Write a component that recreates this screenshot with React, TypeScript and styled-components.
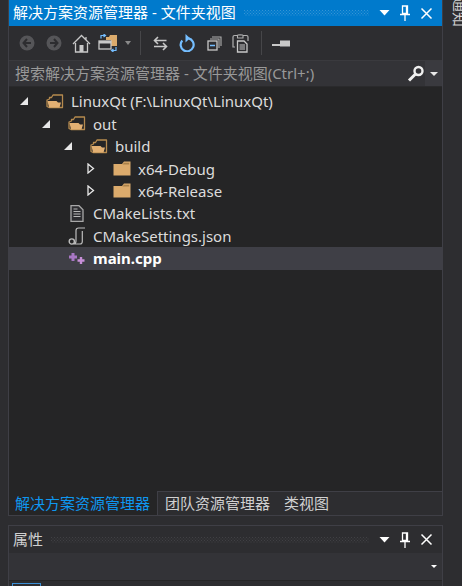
import styled, { createGlobalStyle } from "styled-components";

const GlobalStyle = createGlobalStyle`
  html, body {
    margin: 0;
    padding: 0;
    height: 100%;
    overflow: hidden;
    background: #2d2d30;
  }
  #root {
    height: 100%;
  }
`;

const CJK_FONT = `"Noto Sans", "Noto Sans CJK SC", sans-serif`;

type TreeItem = {
  label: string;
  indent: number;
  arrow?: "open" | "closed";
  icon: "open" | "closed" | "text" | "settings" | "cpp";
  active?: boolean;
};

const items: TreeItem[] = [
  { label: "LinuxQt (F:\\LinuxQt\\LinuxQt)", indent: 11, arrow: "open", icon: "open" },
  { label: "out", indent: 33, arrow: "open", icon: "open" },
  { label: "build", indent: 55, arrow: "open", icon: "open" },
  { label: "x64-Debug", indent: 78, arrow: "closed", icon: "closed" },
  { label: "x64-Release", indent: 78, arrow: "closed", icon: "closed" },
  { label: "CMakeLists.txt", indent: 33, icon: "text" },
  { label: "CMakeSettings.json", indent: 33, icon: "settings" },
  { label: "main.cpp", indent: 33, icon: "cpp", active: true },
];

function Grip({ id }: { id: string }) {
  return (
    <svg width="100%" height="6">
      <defs>
        <pattern id={id} width="3" height="3" patternUnits="userSpaceOnUse">
          <rect x="0" y="0" width="1" height="1" fill="currentColor" />
          <rect x="1.5" y="1.5" width="1" height="1" fill="currentColor" />
        </pattern>
      </defs>
      <rect width="100%" height="6" fill={`url(#${id})`} />
    </svg>
  );
}

function PanelButtons() {
  return (
    <HeaderButtons>
      <svg width="11" height="6" viewBox="0 0 11 6">
        <path d="M0.500 0h10L5.500 5.500z" fill="#fff" />
      </svg>
      <svg width="10" height="16" viewBox="0 0 10 16">
        <path d="M2.500 1h5v7.500h-5z M6.500 1v7.500 M0 9.500h10 M5 10v6" fill="none" stroke="#fff" strokeWidth="1.300" />
      </svg>
      <svg width="13" height="13" viewBox="0 0 13 13">
        <path d="M1.500 1.500l10 10M11.500 1.500l-10 10" fill="none" stroke="#fff" strokeWidth="1.500" />
      </svg>
    </HeaderButtons>
  );
}

function FolderIcon({ open }: { open: boolean }) {
  if (open) {
    return (
      <svg width="18" height="15" viewBox="0 0 18 15">
        <path d="M1 12.500V6l2.500-1V3.500h2L7 1h9.500v12.500H3z" fill="#252526" stroke="#b58a4e" strokeWidth="1.300" strokeLinejoin="round" />
        <path d="M1.500 7h9l1.500 1.500h3L13.500 13.500H3z" fill="#e2b073" />
      </svg>
    );
  }
  return (
    <svg width="18" height="15" viewBox="0 0 18 15">
      <path d="M0.500 3h8.500l2-2.500h6.500V14.500H0.500z" fill="#dcab6c" />
      <path d="M9.500 3.500l1.500-1.800h5.200v1.800z" fill="#a9814a" />
    </svg>
  );
}

function FileIcon({ kind }: { kind: TreeItem["icon"] }) {
  if (kind === "open" || kind === "closed") {
    return <FolderIcon open={kind === "open"} />;
  }
  if (kind === "text") {
    return (
      <svg width="14" height="17" viewBox="0 0 14 17">
        <path d="M1 0.700h8l4 4V16.300H1z" fill="#2d2d30" stroke="#a8a8a8" strokeWidth="1.300" />
        <path d="M3.500 6.500h7M3.500 9h7M3.500 11.500h7M3.500 4h4" stroke="#b8b8b8" strokeWidth="1.100" />
      </svg>
    );
  }
  if (kind === "settings") {
    return (
      <svg width="18" height="18" viewBox="0 0 18 18">
        <path d="M17 1H10.500C8.800 1 8 2 8 3.500V14c0 1.800-1 2.800-2.500 3H12c1.500 0 2.300-.8 2.300-2.500V4" fill="none" stroke="#bdbdbd" strokeWidth="1.200" />
        <circle cx="3.800" cy="14.500" r="2.600" fill="#252526" stroke="#bdbdbd" strokeWidth="1.400" />
      </svg>
    );
  }
  return (
    <svg width="18" height="13" viewBox="0 0 18 13">
      <path d="M5 1v8M1 5h8" stroke="#a877c4" strokeWidth="3" />
      <path d="M13 5v7M9.500 8.500h7" stroke="#c78fd8" strokeWidth="2.400" />
    </svg>
  );
}

export default function App() {
  return (
    <>
      <GlobalStyle />
      <Page>
        <LeftEdge />
        <Main>
          <ExplorerPanel>
            <TitleBar>
              <TitleText>解决方案资源管理器 - 文件夹视图</TitleText>
              <GripArea $color="#3595d6">
                <Grip id="grip-title" />
              </GripArea>
              <PanelButtons />
            </TitleBar>
            <Toolbar>
              <ToolIcon>
                <svg width="16" height="16" viewBox="0 0 16 16">
                  <circle cx="8" cy="8" r="7.500" fill="#555558" />
                  <path d="M8 4L4.500 8 8 12M4.500 8H12" fill="none" stroke="#2d2d30" strokeWidth="2" />
                </svg>
              </ToolIcon>
              <ToolIcon>
                <svg width="16" height="16" viewBox="0 0 16 16">
                  <circle cx="8" cy="8" r="7.500" fill="#555558" />
                  <path d="M8 4l3.500 4L8 12M11.500 8H4" fill="none" stroke="#2d2d30" strokeWidth="2" />
                </svg>
              </ToolIcon>
              <ToolIcon>
                <svg width="19" height="19" viewBox="0 0 19 19">
                  <path d="M1 10L9.500 1.500 18 10M14 3v3" fill="none" stroke="#c8c8c8" strokeWidth="1.300" />
                  <path d="M3.500 9v9h12V9" fill="none" stroke="#c8c8c8" strokeWidth="1.300" />
                  <rect x="7.500" y="11" width="4" height="7" fill="#c8c8c8" />
                </svg>
              </ToolIcon>
              <ToolIcon>
                <svg width="20" height="18" viewBox="0 0 20 18">
                  <path d="M8 3h3l1-2h7v11h-6V6H8z" fill="#dcab6c" />
                  <rect x="1" y="7" width="12" height="8" fill="#2d2d30" stroke="#c8c8c8" strokeWidth="1.300" />
                  <rect x="1" y="7" width="12" height="2.500" fill="#c8c8c8" />
                  <path d="M3 4.500V1.500h4M5.500 0l2 1.500-2 1.500" stroke="#75beff" strokeWidth="1.200" fill="none" />
                  <path d="M18 13v3.500h-4M15.500 15l-2 1.500 2 1.500" stroke="#75beff" strokeWidth="1.200" fill="none" />
                </svg>
              </ToolIcon>
              <SmallCaret />
              <ToolDivider />
              <ToolIcon>
                <svg width="15" height="15" viewBox="0 0 15 15">
                  <path d="M5 1L1.500 4.500 5 8M2 4.500h11.500M10 7l3.500 3.500L10 14M13 10.500H1" fill="none" stroke="#c8c8c8" strokeWidth="1.600" />
                </svg>
              </ToolIcon>
              <ToolIcon>
                <svg width="16" height="18" viewBox="0 0 16 18">
                  <path d="M9.500 4.400a6.500 6.500 0 1 1-6.200 2" fill="none" stroke="#75beff" strokeWidth="2.200" />
                  <path d="M6.500 0L11 4.300 6.500 8.500z" fill="#75beff" />
                </svg>
              </ToolIcon>
              <ToolIcon>
                <svg width="15" height="15" viewBox="0 0 15 15">
                  <path d="M5 1h9v9" fill="none" stroke="#b0b0b0" strokeWidth="1.100" />
                  <path d="M3 3h9v9" fill="none" stroke="#b0b0b0" strokeWidth="1.100" />
                  <rect x="1" y="5" width="9" height="9" fill="#2d2d30" stroke="#c8c8c8" strokeWidth="1.300" />
                  <path d="M3 9.500h5" stroke="#75beff" strokeWidth="1.500" />
                </svg>
              </ToolIcon>
              <ToolIcon>
                <svg width="18" height="19" viewBox="0 0 18 19">
                  <path d="M3 13H1V3c0-1 .5-1.500 1.500-1.500h3M11 1.500h3.500c1 0 1.500.5 1.500 1.500v4" fill="none" stroke="#b0b0b0" strokeWidth="1.200" />
                  <path d="M5.500 1.500c0-1 5.500-1 5.500 0v2.500H5.500z" fill="none" stroke="#b0b0b0" strokeWidth="1.100" />
                  <path d="M5.500 7h6.500l3 3v8H5.500z" fill="#2d2d30" stroke="#c8c8c8" strokeWidth="1.300" />
                  <path d="M7.500 11h5.500M7.500 13h5.500M7.500 15h5.500" stroke="#c8c8c8" strokeWidth="1.100" />
                </svg>
              </ToolIcon>
              <ToolDivider />
              <ToolIcon>
                <svg width="18" height="7" viewBox="0 0 18 7">
                  <path d="M0 4h8V6H0z" fill="#c8c8c8" />
                  <path d="M8 0.500h10v6H8z" fill="#c8c8c8" />
                </svg>
              </ToolIcon>
            </Toolbar>
            <SearchBar>
              <SearchText>搜索解决方案资源管理器 - 文件夹视图(Ctrl+;)</SearchText>
              <svg width="18" height="17" viewBox="0 0 18 17">
                <circle cx="11.500" cy="6" r="4" fill="none" stroke="#f0f0f0" strokeWidth="2.400" />
                <path d="M8.500 9L2 15.500" stroke="#f0f0f0" strokeWidth="3" />
              </svg>
              <SearchCaretBox>
                <SearchCaret />
              </SearchCaretBox>
            </SearchBar>
            <Tree>
              {items.map((item) => (
                <Row key={item.label} $active={item.active} $indent={item.indent}>
                  <ArrowSlot>
                    {item.arrow === "open" && (
                      <svg width="8" height="8" viewBox="0 0 8 8">
                        <path d="M8 0V8H0z" fill="#e8e8e8" />
                      </svg>
                    )}
                    {item.arrow === "closed" && (
                      <svg width="8" height="11" viewBox="0 0 8 11">
                        <path d="M1 1l5.500 4.500L1 10z" fill="none" stroke="#e8e8e8" strokeWidth="1.300" />
                      </svg>
                    )}
                  </ArrowSlot>
                  <IconSlot>
                    <FileIcon kind={item.icon} />
                  </IconSlot>
                  <RowLabel $active={item.active}>{item.label}</RowLabel>
                </Row>
              ))}
            </Tree>
            <Tabs>
              <Tab $selected>解决方案资源管理器</Tab>
              <Tab>团队资源管理器</Tab>
              <Tab>类视图</Tab>
            </Tabs>
          </ExplorerPanel>
          <PropertiesPanel>
            <PropertiesHeader>
              <PropertiesTitle>属性</PropertiesTitle>
              <GripArea $color="#404044">
                <Grip id="grip-props" />
              </GripArea>
              <PanelButtons />
            </PropertiesHeader>
            <Combo>
              <ComboCaret />
            </Combo>
            <PropertyTools>
              <SelectedTool />
            </PropertyTools>
          </PropertiesPanel>
        </Main>
        <RightEdge>
          <VerticalTab>通知</VerticalTab>
        </RightEdge>
      </Page>
    </>
  );
}

const Page = styled.div`
  display: flex;
  height: 586px;
  width: 462px;
  overflow: hidden;
  background: #2d2d30;
  font-family: ${CJK_FONT};
`;

const LeftEdge = styled.div`
  width: 8px;
  flex: none;
`;

const Main = styled.div`
  width: 435px;
  flex: none;
  display: flex;
  flex-direction: column;
  gap: 9px;
`;

const ExplorerPanel = styled.div`
  height: 516px;
  flex: none;
  display: flex;
  flex-direction: column;
  box-sizing: border-box;
  border-left: 1px solid #3f3f46;
  border-right: 1px solid #3f3f46;
  border-bottom: 1px solid #3f3f46;
`;

const TitleBar = styled.div`
  height: 26px;
  flex: none;
  display: flex;
  align-items: center;
  background: #007acc;
  padding: 0 9px 0 4px;
  box-sizing: border-box;
`;

const TitleText = styled.span`
  color: #fff;
  font-size: 15px;
  line-height: 22px;
  margin-bottom: 3px;
  white-space: nowrap;
`;

const GripArea = styled.div<{ $color: string }>`
  flex: 1;
  height: 6px;
  margin: 0 10px 0 8px;
  color: ${(p) => p.$color};
  overflow: hidden;
  svg {
    display: block;
  }
`;

const HeaderButtons = styled.div`
  display: flex;
  align-items: center;
  gap: 10px;
  flex: none;
`;

const Toolbar = styled.div`
  height: 34px;
  flex: none;
  display: flex;
  align-items: center;
  padding-left: 7px;
  gap: 5px;
`;

const ToolIcon = styled.div`
  width: 22px;
  display: flex;
  justify-content: center;
  align-items: center;
  flex: none;
`;

const SmallCaret = styled.div`
  width: 0;
  height: 0;
  border-left: 3.5px solid transparent;
  border-right: 3.5px solid transparent;
  border-top: 4px solid #8a8a8a;
  margin-left: 1px;
`;

const ToolDivider = styled.div`
  width: 1px;
  height: 24px;
  background: #464649;
  margin: 0 3px 0 4px;
`;

const SearchBar = styled.div`
  height: 27px;
  flex: none;
  display: flex;
  align-items: center;
  background: #333337;
  padding-left: 6px;
  box-sizing: border-box;
  border-top: 1px solid #3a3a3e;
  border-bottom: 1px solid #2a2a2c;
`;

const SearchText = styled.span`
  flex: 1;
  color: #999;
  font-size: 15px;
  line-height: 22px;
  margin-bottom: 2px;
  white-space: nowrap;
`;

const SearchCaretBox = styled.div`
  width: 17px;
  align-self: stretch;
  display: flex;
  align-items: center;
  justify-content: center;
  background: #3a3a3f;
`;

const SearchCaret = styled.div`
  width: 0;
  height: 0;
  border-left: 4px solid transparent;
  border-right: 4px solid transparent;
  border-top: 4px solid #e8e8e8;
`;

const Tree = styled.div`
  flex: 1;
  background: #252526;
  padding-top: 3px;
`;

const Row = styled.div<{ $active?: boolean; $indent: number }>`
  height: 22.45px;
  display: flex;
  align-items: center;
  padding-left: ${(p) => p.$indent}px;
  background: ${(p) => (p.$active ? "#3f3f46" : "transparent")};
`;

const ArrowSlot = styled.div`
  width: 26px;
  flex: none;
  display: flex;
  align-items: center;
`;

const IconSlot = styled.div`
  width: 18px;
  flex: none;
  display: flex;
  align-items: center;
  justify-content: center;
`;

const RowLabel = styled.span<{ $active?: boolean }>`
  color: ${(p) => (p.$active ? "#fff" : "#dcdcdc")};
  font-size: 15px;
  font-weight: ${(p) => (p.$active ? 700 : 400)};
  white-space: nowrap;
  margin-left: 7px;
`;

const Tabs = styled.div`
  height: 24px;
  flex: none;
  display: flex;
  background: #2d2d30;
  border-top: 1px solid #3f3f46;
  box-sizing: border-box;
`;

const Tab = styled.div<{ $selected?: boolean }>`
  margin-top: -1px;
  height: 24px;
  box-sizing: border-box;
  padding: 1px 7px 0 ${(p) => (p.$selected ? 6 : 7)}px;
  line-height: 22px;
  font-size: 15px;
  white-space: nowrap;
  color: ${(p) => (p.$selected ? "#0e97f0" : "#d0d0d0")};
  background: ${(p) => (p.$selected ? "#252526" : "transparent")};
  border-right: ${(p) => (p.$selected ? "1px solid #3f3f46" : "none")};
`;

const PropertiesPanel = styled.div`
  flex: 1;
  display: flex;
  flex-direction: column;
  border: 1px solid #3f3f46;
  border-bottom: none;
  min-height: 0;
`;

const PropertiesHeader = styled.div`
  height: 27px;
  flex: none;
  display: flex;
  align-items: center;
  padding: 0 9px 0 4px;
  box-sizing: border-box;
`;

const PropertiesTitle = styled.span`
  color: #d0d0d0;
  font-size: 15px;
  line-height: 22px;
  margin-bottom: 2px;
`;

const Combo = styled.div`
  height: 28px;
  flex: none;
  display: flex;
  align-items: center;
  justify-content: flex-end;
  background: #333337;
  padding-right: 5px;
  box-sizing: border-box;
  border-bottom: 1px solid #252526;
`;

const ComboCaret = styled.div`
  width: 0;
  height: 0;
  border-left: 3px solid transparent;
  border-right: 3px solid transparent;
  border-top: 3px solid #fff;
`;

const PropertyTools = styled.div`
  flex: 1;
  padding: 2px 0 0 3px;
`;

const SelectedTool = styled.div`
  width: 29px;
  height: 20px;
  box-sizing: border-box;
  border: 1px solid #3b8fd6;
`;

const RightEdge = styled.div`
  flex: 1;
  padding-left: 9px;
  overflow: hidden;
`;

const VerticalTab = styled.span`
  display: block;
  margin-top: -3px;
  writing-mode: vertical-rl;
  text-orientation: sideways;
  font-size: 15px;
  line-height: 15px;
  color: #d0d0d0;
  white-space: nowrap;
`;
